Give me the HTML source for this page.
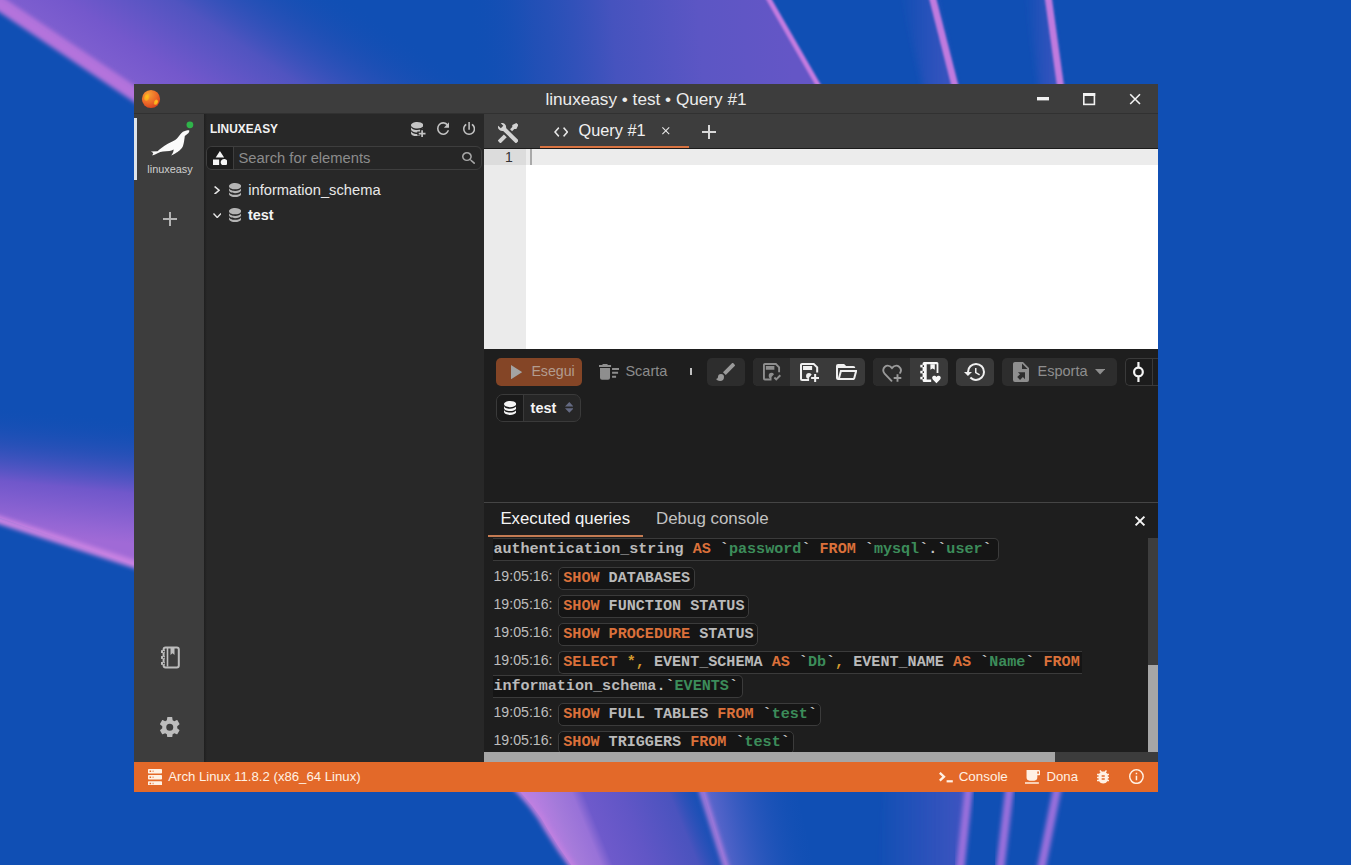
<!DOCTYPE html>
<html><head><meta charset="utf-8">
<style>
*{box-sizing:border-box}
html,body{margin:0;padding:0}
body{width:1351px;height:865px;overflow:hidden;position:relative;background:#104fb4;font-family:"Liberation Sans",sans-serif}
.a{position:absolute}
#bg{position:absolute;left:0;top:0}
.q{font-family:"Liberation Mono",monospace;font-weight:bold;font-size:15.1px;white-space:pre}
</style></head><body>
<svg id="bg" width="1351" height="865" viewBox="0 0 1351 865">
<defs>
<filter id="b1" x="-50%" y="-50%" width="200%" height="200%"><feGaussianBlur stdDeviation="2"/></filter>
<filter id="b2" x="-50%" y="-50%" width="200%" height="200%"><feGaussianBlur stdDeviation="1"/></filter>
<filter id="b3" x="-50%" y="-50%" width="200%" height="200%"><feGaussianBlur stdDeviation="3"/></filter>
<linearGradient id="gTopA" gradientUnits="userSpaceOnUse" x1="0" y1="4" x2="111" y2="-162">
<stop offset="0" stop-color="#8060d0"/>
<stop offset="0.2" stop-color="#7458cc"/>
<stop offset="0.5" stop-color="#5054c0"/>
<stop offset="0.78" stop-color="#2a50b6" stop-opacity="0.5"/>
<stop offset="1" stop-color="#104fb4" stop-opacity="0"/>
</linearGradient>
<linearGradient id="gTopB" gradientUnits="userSpaceOnUse" x1="790" y1="30" x2="470" y2="50">
<stop offset="0" stop-color="#6456c6"/>
<stop offset="0.28" stop-color="#5c56c4"/>
<stop offset="0.55" stop-color="#4653be"/>
<stop offset="0.8" stop-color="#2c50b7" stop-opacity="0.6"/>
<stop offset="1" stop-color="#104fb4" stop-opacity="0"/>
</linearGradient>
<linearGradient id="gLeft" gradientUnits="userSpaceOnUse" x1="0" y1="405" x2="-12" y2="530">
<stop offset="0" stop-color="#104fb4" stop-opacity="0"/>
<stop offset="0.3" stop-color="#3a52bb" stop-opacity="0.55"/>
<stop offset="0.6" stop-color="#7558cc" stop-opacity="0.95"/>
<stop offset="0.9" stop-color="#9466d4"/>
<stop offset="1" stop-color="#a06ad6"/>
</linearGradient>
<linearGradient id="gBot" gradientUnits="userSpaceOnUse" x1="548" y1="830" x2="714.5" y2="761.6">
<stop offset="0" stop-color="#b67ee0"/>
<stop offset="0.1" stop-color="#a47ada"/>
<stop offset="0.2" stop-color="#9872d8"/>
<stop offset="0.26" stop-color="#6e5acb"/>
<stop offset="0.45" stop-color="#6156c6"/>
<stop offset="0.7" stop-color="#4a53be"/>
<stop offset="0.92" stop-color="#104fb4" stop-opacity="0"/>
</linearGradient>
<linearGradient id="gBot2" gradientUnits="userSpaceOnUse" x1="712" y1="830" x2="810" y2="810">
<stop offset="0" stop-color="#6a6ad0" stop-opacity="0.9"/>
<stop offset="1" stop-color="#104fb4" stop-opacity="0"/>
</linearGradient>
<linearGradient id="gGlowL" x1="0" y1="0" x2="1" y2="0">
<stop offset="0" stop-color="#7a5ad0" stop-opacity="0"/>
<stop offset="1" stop-color="#7a5ad0" stop-opacity="0.45"/>
</linearGradient>
</defs>
<rect width="1351" height="865" fill="#104fb4"/>
<polygon points="0,0 140,94 140,110 834,110 769,0" fill="url(#gTopB)"/>
<polygon points="0,0 140,94 140,110 834,110 769,0" fill="url(#gTopA)"/>
<line x1="-10" y1="-2.7" x2="145" y2="101" stroke="#b473dc" stroke-width="14" filter="url(#b1)"/>
<line x1="767" y1="-4" x2="821" y2="90" stroke="#c47ce0" stroke-width="5" filter="url(#b2)"/>
<polygon points="900,-10 934,-10 958,95 925,95" fill="url(#gGlowL)" filter="url(#b3)"/>
<line x1="932" y1="-4" x2="956" y2="90" stroke="#c07ade" stroke-width="7" filter="url(#b2)"/>
<polygon points="1025,-10 1049,-10 1062,95 1040,95" fill="url(#gGlowL)" filter="url(#b3)"/>
<line x1="1048" y1="-4" x2="1061" y2="90" stroke="#c07ade" stroke-width="7" filter="url(#b2)"/>
<polygon points="0,380 140,380 140,567 0,518" fill="url(#gLeft)"/>
<line x1="-10" y1="517" x2="140" y2="566" stroke="#c882e2" stroke-width="8" filter="url(#b1)"/>
<path d="M508,780 Q535,805 548,830 Q560,850 575,870 L760,870 L705,780 Z" fill="url(#gBot)"/>
<path d="M508,780 Q535,805 548,830 Q560,850 575,870" fill="none" stroke="#c080e0" stroke-width="6" filter="url(#b1)"/>
<polygon points="701,785 795,785 815,870 727,870" fill="url(#gBot2)"/>
<line x1="700" y1="785" x2="727" y2="870" stroke="#a87adc" stroke-width="6" filter="url(#b1)"/>
<polygon points="885,780 968,780 960,875 877,875" fill="url(#gGlowL)" filter="url(#b3)"/>
<line x1="969" y1="785" x2="960" y2="870" stroke="#9a70dc" stroke-width="8.5" filter="url(#b1)"/>
<line x1="1010" y1="785" x2="1000" y2="870" stroke="#9a70dc" stroke-width="8.5" filter="url(#b1)"/>
<line x1="1058" y1="785" x2="1041" y2="870" stroke="#9a70dc" stroke-width="8.5" filter="url(#b1)"/>
</svg>

<div class="a" style="left:134px;top:84px;width:1024px;height:30px;background:#3d3d3d;"></div>
<div class="a" style="left:134px;top:113px;width:1024px;height:1px;background:#313131;"></div>
<div class="a" style="left:134px;top:84px;width:1024px;height:30px;line-height:30px;text-align:center;color:#ececec;font-size:17.2px">linuxeasy • test • Query #1</div>
<svg class="a" style="left:140px;top:88px" width="22" height="22" viewBox="0 0 22 22">
<defs><radialGradient id="ball" cx="0.35" cy="0.25" r="0.85"><stop offset="0" stop-color="#f7a035"/><stop offset="0.55" stop-color="#ec6a28"/><stop offset="1" stop-color="#d23a1e"/></radialGradient>
<radialGradient id="spot" cx="0.5" cy="0.4" r="0.6"><stop offset="0" stop-color="#ffc21a"/><stop offset="1" stop-color="#f8a020"/></radialGradient></defs>
<circle cx="11" cy="11" r="9.1" fill="url(#ball)"/>
<ellipse cx="6.8" cy="9.4" rx="2.5" ry="3.4" transform="rotate(15 6.8 9.4)" fill="url(#spot)"/>
<ellipse cx="16" cy="14.2" rx="1.9" ry="2.7" transform="rotate(25 16 14.2)" fill="url(#spot)"/>
</svg>
<svg class="a" style="left:1030px;top:88px" width="120" height="22" viewBox="0 0 120 22">
<rect x="7" y="9" width="12" height="3.4" fill="#f2f2f2"/>
<rect x="53.8" y="5.8" width="10.6" height="10.6" fill="none" stroke="#f2f2f2" stroke-width="1.6"/>
<rect x="53" y="5" width="12.2" height="3" fill="#f2f2f2"/>
<path d="M100.2 6.2 L110 16 M110 6.2 L100.2 16" stroke="#f2f2f2" stroke-width="1.6"/>
</svg>
<div class="a" style="left:134px;top:114px;width:70px;height:648px;background:#3d3d3d;"></div>
<div class="a" style="left:134px;top:118px;width:3px;height:62px;background:#dde3ea;"></div>
<svg class="a" style="left:146px;top:118px" width="50" height="42" viewBox="0 0 50 42">
<path d="M4.9,33.5 L11.5,33.2 C14,31 17,28.5 21.8,25.7 C25,24 29,22.5 31,20.4 C33,18.5 34.5,15.5 36.9,13.8 C38.5,12.7 40.5,12.2 43.2,12.2 C43.6,13.5 42.8,15 41.3,16 L38.8,18 C38.6,19.5 38.5,20.5 38.3,21.8 C38,24 37.5,26.5 36.9,28.2 C36,30 35,31 34,32 C32,33.8 30,35 25.2,37.6 C26,36.3 26.8,35 27.2,34 L27.7,31.6 C26,32.5 25,32.8 23.3,33 C21,33.2 19,33.3 17,33.5 C15,33.8 13.5,34.3 12.1,35 C10,36 8,37 6.3,37.6 C6.5,36.5 7,35.7 7.3,35 Z" fill="#fafafa"/>
<circle cx="43.9" cy="6.8" r="3.4" fill="#2fb44a"/>
</svg>
<div class="a" style="left:134px;top:162px;width:72px;text-align:center;color:#cfcfcf;font-size:10.9px;line-height:14px">linuxeasy</div>
<div class="a" style="left:169px;top:212px;width:2px;height:14px;background:#b4b4b4;"></div>
<div class="a" style="left:163px;top:218px;width:14px;height:2px;background:#b4b4b4;"></div>
<svg class="a" style="left:158px;top:644px" width="24" height="26" viewBox="0 0 24 26">
<rect x="5.6" y="3.6" width="15.2" height="19.8" rx="2" fill="none" stroke="#bdbdbd" stroke-width="2"/>
<path d="M9.5 4 V22.6" stroke="#bdbdbd" stroke-width="1.6"/>
<path d="M12.5 4 V11 L14.5 9.3 L16.5 11 V4 Z" fill="#bdbdbd"/>
<rect x="3" y="6.2" width="4" height="2.8" fill="#bdbdbd"/><rect x="5.2" y="7" width="1.3" height="1.3" fill="#2a2a2a"/>
<rect x="3" y="12.1" width="4" height="2.8" fill="#bdbdbd"/><rect x="5.2" y="12.9" width="1.3" height="1.3" fill="#2a2a2a"/>
<rect x="3" y="18" width="4" height="2.8" fill="#bdbdbd"/><rect x="5.2" y="18.8" width="1.3" height="1.3" fill="#2a2a2a"/>
</svg>
<div class="a" style="left:204px;top:114px;width:280px;height:648px;background:#282828;"></div>
<div class="a" style="left:204px;top:114px;width:3px;height:648px;background:linear-gradient(90deg,#1f1f1f,#282828);"></div>
<div class="a" style="left:210px;top:121px;font-size:11.9px;line-height:16px;color:#f2f2f2;font-weight:bold;white-space:pre;">LINUXEASY</div>
<div class="a" style="left:206px;top:146px;width:276px;height:24px;background:#262626;border:1px solid #3e3e3e;border-radius:6px"></div>
<div class="a" style="left:207px;top:147px;width:27px;height:22px;background:#1c1c1c;border-right:1px solid #3e3e3e;border-radius:5px 0 0 5px"></div>
<div class="a" style="left:238.5px;top:149px;font-size:14.75px;line-height:18px;color:#8c8c8c;font-weight:normal;white-space:pre;">Search for elements</div>
<div class="a" style="left:248.3px;top:180.5px;font-size:14.7px;line-height:18px;color:#e8e8e8;font-weight:normal;white-space:pre;">information_schema</div>
<div class="a" style="left:248px;top:205.5px;font-size:14.45px;line-height:18px;color:#f4f4f4;font-weight:bold;white-space:pre;">test</div>
<div class="a" style="left:484px;top:114px;width:674px;height:34px;background:#3d3d3d;"></div>
<div class="a" style="left:484px;top:148px;width:674px;height:1px;background:#1b1b1b;"></div>
<div class="a" style="left:540px;top:146px;width:149px;height:2px;background:#d87341;"></div>
<div class="a" style="left:578.6px;top:120.5px;font-size:16.3px;line-height:19px;color:#f0f0f0;font-weight:normal;white-space:pre;">Query #1</div>
<div class="a" style="left:484px;top:149px;width:674px;height:200px;background:#ffffff;"></div>
<div class="a" style="left:484px;top:149px;width:42px;height:200px;background:#ebebeb;"></div>
<div class="a" style="left:484px;top:149px;width:42px;height:16px;background:#dcdcdc;"></div>
<div class="a" style="left:526px;top:149px;width:632px;height:16px;background:#ececec;"></div>
<div class="a" style="left:505px;top:149px;font-size:14px;line-height:16px;color:#333333;font-weight:normal;white-space:pre;font-family:"Liberation Mono",monospace;">1</div>
<div class="a" style="left:530px;top:149px;width:2px;height:16px;background:#a9a9a9;"></div>
<div class="a" style="left:484px;top:349px;width:674px;height:153px;background:#1e1e1e;"></div>
<div class="a" style="left:484px;top:502px;width:674px;height:1px;background:#454545;"></div>
<div class="a" style="left:496px;top:358px;width:86px;height:28px;background:#844526;border-radius:5px"></div>
<div class="a" style="left:531.4px;top:362px;font-size:14.2px;line-height:18px;color:#b39c8f;font-weight:normal;white-space:pre;">Esegui</div>
<div class="a" style="left:625.4px;top:361.6px;font-size:14.5px;line-height:18px;color:#8c8c8c;font-weight:normal;white-space:pre;">Scarta</div>
<div class="a" style="left:689.6px;top:367.8px;width:2.4px;height:7.7px;background:#c0c0c0;"></div>
<div class="a" style="left:707px;top:358px;width:37.5px;height:28px;background:#2d2d2d;border-radius:5px"></div>
<div class="a" style="left:753px;top:358px;width:112px;height:28px;background:#3a3a3a;border-radius:5px"></div>
<div class="a" style="left:753px;top:358px;width:37px;height:28px;background:#2b2b2b;border-radius:5px 0 0 5px"></div>
<div class="a" style="left:873px;top:358px;width:75px;height:28px;background:#3a3a3a;border-radius:5px"></div>
<div class="a" style="left:873px;top:358px;width:37px;height:28px;background:#2b2b2b;border-radius:5px 0 0 5px"></div>
<div class="a" style="left:956px;top:358px;width:38px;height:28px;background:#3a3a3a;border-radius:5px"></div>
<div class="a" style="left:1002px;top:358px;width:115px;height:28px;background:#2d2d2d;border-radius:5px"></div>
<div class="a" style="left:1125px;top:358px;width:33px;height:28px;background:#1c1c1c;border:1px solid #3a3a3a;border-right:none;border-radius:5px 0 0 5px"></div>
<div class="a" style="left:1152px;top:359px;width:1px;height:26px;background:#3a3a3a;"></div>
<div class="a" style="left:1037.5px;top:361.6px;font-size:14.54px;line-height:18px;color:#8e8e8e;font-weight:normal;white-space:pre;">Esporta</div>
<div class="a" style="left:496px;top:394px;width:85px;height:28px;background:#262626;border:1px solid #3a3a3a;border-radius:7px"></div>
<div class="a" style="left:497px;top:395px;width:27px;height:26px;background:#1a1a1a;border-right:1px solid #3a3a3a;border-radius:6px 0 0 6px"></div>
<div class="a" style="left:530.6px;top:398.5px;font-size:14.45px;line-height:18px;color:#f4f4f4;font-weight:bold;white-space:pre;">test</div>
<div class="a" style="left:484px;top:503px;width:674px;height:259px;background:#1e1e1e;"></div>
<div class="a" style="left:500.4px;top:508.5px;font-size:16.8px;line-height:20px;color:#f4f4f4;font-weight:normal;white-space:pre;">Executed queries</div>
<div class="a" style="left:656px;top:508.5px;font-size:16.9px;line-height:20px;color:#c2c2c2;font-weight:normal;white-space:pre;">Debug console</div>
<div class="a" style="left:488px;top:534.6px;width:155px;height:2.5px;background:#c47b52;"></div>
<svg class="a" style="left:1134px;top:515px" width="12" height="12" viewBox="0 0 12 12"><path d="M1.6,1.6 L10.4,10.4 M10.4,1.6 L1.6,10.4" stroke="#f4f4f4" stroke-width="2"/></svg>
<div class="a" style="left:1148px;top:538px;width:10px;height:214px;background:#3d3d3d;"></div>
<div class="a" style="left:1148px;top:665px;width:10px;height:87px;background:#a6a6a6;"></div>
<div class="a" style="left:484px;top:752px;width:674px;height:10px;background:#3c3c3c;"></div>
<div class="a" style="left:484px;top:752px;width:571px;height:10px;background:#a6a6a6;"></div>
<svg class="a" style="left:881px;top:362px" width="22" height="21" viewBox="0 0 22 21"><path d="M10.5,18.8 L3.6,11.6 C1.7,9.6 1.8,6.4 3.9,4.7 C6,3.1 9,3.6 11,6.1 C13,3.6 16,3.1 18.1,4.7 C20.1,6.3 20.3,8.8 19.2,10.8" fill="none" stroke="#9a9a9a" stroke-width="1.9" stroke-linecap="round"/><path d="M16.5,12.2 V19.8 M12.7,16 H20.3" stroke="#9a9a9a" stroke-width="1.9"/></svg>
<svg class="a" style="left:919.5px;top:362px" width="21" height="22" viewBox="0 0 21 22"><path d="M4.1,0 H16.9 A1.5,1.5 0 0 1 18.4,1.5 V11.1 H16.6 V2.3 H6.7 V17.4 H11.2 V20 H4.1 A1.5,1.5 0 0 1 2.6,18.5 V1.5 A1.5,1.5 0 0 1 4.1,0Z" fill="#f8f8f8"/><path d="M10.4,2.3 H14.8 V7.8 L12.6,6.4 L10.4,7.8Z" fill="#f8f8f8"/><rect x="0.3" y="2.8" width="4.1" height="2.6" fill="#f8f8f8"/><rect x="0.3" y="8.8" width="4.1" height="2.6" fill="#f8f8f8"/><rect x="0.3" y="14.8" width="4.1" height="2.6" fill="#f8f8f8"/><rect x="2.6" y="3.3" width="1.4" height="1.6" fill="#222"/><rect x="2.6" y="9.3" width="1.4" height="1.6" fill="#222"/><rect x="2.6" y="15.3" width="1.4" height="1.6" fill="#222"/><path d="M16.45,21.2 L13,17.8 C11.6,16.4 12,14 14,13.8 C15,13.7 15.9,14.2 16.45,15 C17,14.2 17.9,13.7 18.9,13.8 C20.9,14 21.3,16.4 19.9,17.8Z" fill="#f8f8f8"/></svg>
<div class="a" style="left:134px;top:762px;width:1024px;height:30px;background:#e36929;"></div>
<div class="a" style="left:168.3px;top:769px;font-size:13.18px;line-height:16px;color:#fff1e4;font-weight:normal;white-space:pre;">Arch Linux 11.8.2 (x86_64 Linux)</div>
<div class="a" style="left:958.7px;top:769px;font-size:13.4px;line-height:16px;color:#fff1e4;font-weight:normal;white-space:pre;">Console</div>
<div class="a" style="left:1046.5px;top:769px;font-size:13.2px;line-height:16px;color:#fff1e4;font-weight:normal;white-space:pre;">Dona</div>
<svg class="a" style="left:939px;top:772px" width="15" height="11" viewBox="0 0 15 11"><path d="M0.8,0.8 L5,4.7 L0.8,8.6" fill="none" stroke="#fff1e4" stroke-width="2.3"/><rect x="7.6" y="8.2" width="6.2" height="2.2" fill="#fff1e4"/></svg>
<svg class="a" style="left:160.10px;top:716.80px" width="19.50" height="20.40" viewBox="2.271 2.000 19.454 20.000" preserveAspectRatio="none"><path d="M12,15.5A3.5,3.5 0 0,1 8.5,12A3.5,3.5 0 0,1 12,8.5A3.5,3.5 0 0,1 15.5,12A3.5,3.5 0 0,1 12,15.5M19.43,12.97C19.47,12.65 19.5,12.33 19.5,12C19.5,11.67 19.47,11.34 19.43,11L21.54,9.37C21.73,9.22 21.78,8.95 21.66,8.73L19.66,5.27C19.54,5.05 19.27,4.96 19.05,5.05L16.56,6.05C16.04,5.66 15.5,5.32 14.87,5.07L14.5,2.42C14.46,2.18 14.25,2 14,2H10C9.75,2 9.54,2.18 9.5,2.42L9.13,5.07C8.5,5.32 7.96,5.66 7.44,6.05L4.95,5.05C4.73,4.96 4.46,5.05 4.34,5.27L2.34,8.73C2.21,8.95 2.27,9.22 2.46,9.37L4.57,11C4.53,11.34 4.5,11.67 4.5,12C4.5,12.33 4.53,12.65 4.57,12.97L2.46,14.63C2.27,14.78 2.21,15.05 2.34,15.27L4.34,18.73C4.46,18.95 4.73,19.03 4.95,18.95L7.44,17.94C7.96,18.34 8.5,18.68 9.13,18.93L9.5,21.58C9.54,21.82 9.75,22 10,22H14C14.25,22 14.46,21.82 14.5,21.58L14.87,18.93C15.5,18.67 16.04,18.34 16.56,17.94L19.05,18.95C19.27,19.03 19.54,18.95 19.66,18.73L21.66,15.27C21.78,15.05 21.73,14.78 21.54,14.63L19.43,12.97Z" fill="#bdbdbd"/></svg>
<svg class="a" style="left:410.70px;top:121.70px" width="12.50" height="14.40" viewBox="4.000 3.000 16.000 18.000" preserveAspectRatio="none"><path d="M12,3C7.58,3 4,4.79 4,7C4,9.21 7.58,11 12,11C16.42,11 20,9.21 20,7C20,4.79 16.42,3 12,3M4,9V12C4,14.21 7.58,16 12,16C16.42,16 20,14.21 20,12V9C20,11.21 16.42,13 12,13C7.58,13 4,11.21 4,9M4,14V17C4,19.21 7.58,21 12,21C16.42,21 20,19.21 20,17V14C20,16.21 16.42,18 12,18C7.58,18 4,16.21 4,14Z" fill="#c4c4c4"/></svg>
<svg class="a" style="left:436.70px;top:122.00px" width="12.30" height="13.00" viewBox="4.000 4.000 16.000 16.000" preserveAspectRatio="none"><path d="M17.65,6.35C16.2,4.9 14.21,4 12,4A8,8 0 0,0 4,12A8,8 0 0,0 12,20C15.73,20 18.84,17.45 19.73,14H17.65C16.83,16.33 14.61,18 12,18A6,6 0 0,1 6,12A6,6 0 0,1 12,6C13.66,6 15.14,6.69 16.22,7.78L13,11H20V4L17.65,6.35Z" fill="#c4c4c4"/></svg>
<svg class="a" style="left:463.00px;top:122.00px" width="12.20" height="13.00" viewBox="4.000 3.000 16.000 17.000" preserveAspectRatio="none"><path d="M16.56,5.44L15.11,6.89C16.84,7.94 18,9.83 18,12A6,6 0 0,1 12,18A6,6 0 0,1 6,12C6,9.83 7.16,7.94 8.88,6.88L7.44,5.44C5.36,6.88 4,9.28 4,12A8,8 0 0,0 12,20A8,8 0 0,0 20,12C20,9.28 18.64,6.88 16.56,5.44M13,3H11V13H13Z" fill="#c4c4c4"/></svg>
<svg class="a" style="left:212.90px;top:150.90px" width="14.60" height="14.60" viewBox="3.000 2.000 19.000 20.000" preserveAspectRatio="none"><path d="M11,13.5V21.5H3V13.5H11M12,2L17.5,11H6.5L12,2M17.5,13C20,13 22,15 22,17.5C22,20 20,22 17.5,22C15,22 13,20 13,17.5C13,15 15,13 17.5,13Z" fill="#f4f4f4"/></svg>
<svg class="a" style="left:461.90px;top:152.20px" width="13.30" height="12.20" viewBox="3.000 3.000 17.500 17.500" preserveAspectRatio="none"><path d="M9.5,3A6.5,6.5 0 0,1 16,9.5C16,11.11 15.41,12.59 14.44,13.73L14.71,14H15.5L20.5,19L19,20.5L14,15.5V14.71L13.73,14.44C12.59,15.41 11.11,16 9.5,16A6.5,6.5 0 0,1 3,9.5A6.5,6.5 0 0,1 9.5,3M9.5,5C7,5 5,7 5,9.5C5,12 7,14 9.5,14C12,14 14,12 14,9.5C14,7 12,5 9.5,5Z" fill="#a8a8a8"/></svg>
<svg class="a" style="left:214.00px;top:185.90px" width="6.40" height="8.60" viewBox="8.590 6.000 7.410 12.000" preserveAspectRatio="none"><path d="M8.59,16.58L13.17,12L8.59,7.41L10,6L16,12L10,18L8.59,16.58Z" fill="#e6e6e6"/></svg>
<svg class="a" style="left:229.00px;top:183.10px" width="12.20" height="14.20" viewBox="4.000 3.000 16.000 18.000" preserveAspectRatio="none"><path d="M12,3C7.58,3 4,4.79 4,7C4,9.21 7.58,11 12,11C16.42,11 20,9.21 20,7C20,4.79 16.42,3 12,3M4,9V12C4,14.21 7.58,16 12,16C16.42,16 20,14.21 20,12V9C20,11.21 16.42,13 12,13C7.58,13 4,11.21 4,9M4,14V17C4,19.21 7.58,21 12,21C16.42,21 20,19.21 20,17V14C20,16.21 16.42,18 12,18C7.58,18 4,16.21 4,14Z" fill="#b4b4b4"/></svg>
<svg class="a" style="left:212.50px;top:212.70px" width="8.50" height="5.50" viewBox="6.000 8.580 12.000 7.420" preserveAspectRatio="none"><path d="M7.41,8.58L12,13.17L16.59,8.58L18,10L12,16L6,10L7.41,8.58Z" fill="#e6e6e6"/></svg>
<svg class="a" style="left:229.00px;top:208.00px" width="12.20" height="14.20" viewBox="4.000 3.000 16.000 18.000" preserveAspectRatio="none"><path d="M12,3C7.58,3 4,4.79 4,7C4,9.21 7.58,11 12,11C16.42,11 20,9.21 20,7C20,4.79 16.42,3 12,3M4,9V12C4,14.21 7.58,16 12,16C16.42,16 20,14.21 20,12V9C20,11.21 16.42,13 12,13C7.58,13 4,11.21 4,9M4,14V17C4,19.21 7.58,21 12,21C16.42,21 20,19.21 20,17V14C20,16.21 16.42,18 12,18C7.58,18 4,16.21 4,14Z" fill="#b4b4b4"/></svg>
<svg class="a" style="left:497.60px;top:123.00px" width="20.40" height="20.00" viewBox="1.999 2.000 20.002 20.001" preserveAspectRatio="none"><path d="M21.71 20.29L20.29 21.71A1 1 0 0 1 18.88 21.71L7.05 9.9A3.81 3.81 0 0 1 6 10A4 4 0 0 1 2.22 4.7L4.76 7.24L5.29 6.71L6.71 5.29L7.24 4.76L4.7 2.22A4 4 0 0 1 10 6A3.81 3.81 0 0 1 9.9 7.05L21.71 18.88A1 1 0 0 1 21.71 20.29M2.29 18.88A1 1 0 0 0 2.29 20.29L3.71 21.71A1 1 0 0 0 5.12 21.71L10.59 16.25L7.76 13.42M20 2L16 4V6L13.83 8.17L15.83 10.17L18 8H20L22 4Z" fill="#d2d2d2"/></svg>
<svg class="a" style="left:554.00px;top:126.50px" width="14.40" height="10.00" viewBox="2.000 6.000 20.000 12.000" preserveAspectRatio="none"><path d="M14.6,16.6L19.2,12L14.6,7.4L16,6L22,12L16,18L14.6,16.6M9.4,16.6L4.8,12L9.4,7.4L8,6L2,12L8,18L9.4,16.6Z" fill="#e8e8e8"/></svg>
<svg class="a" style="left:662.00px;top:127.00px" width="7.60" height="7.50" viewBox="5.000 5.000 14.000 14.000" preserveAspectRatio="none"><path d="M19,6.41L17.59,5L12,10.59L6.41,5L5,6.41L10.59,12L5,17.59L6.41,19L12,13.41L17.59,19L19,17.59L13.41,12L19,6.41Z" fill="#e8e8e8"/></svg>
<svg class="a" style="left:702.00px;top:125.00px" width="14.00" height="14.00" viewBox="5.000 5.000 14.000 14.000" preserveAspectRatio="none"><path d="M19,13H13V19H11V13H5V11H11V5H13V11H19V13Z" fill="#d8d8d8"/></svg>
<svg class="a" style="left:510.60px;top:364.50px" width="11.20" height="14.30" viewBox="8.000 5.140 11.000 14.000" preserveAspectRatio="none"><path d="M8,5.14V19.14L19,12.14L8,5.14Z" fill="#a3a3a3"/></svg>
<svg class="a" style="left:598.90px;top:364.00px" width="20.10" height="15.70" viewBox="2.000 4.000 20.000 16.000" preserveAspectRatio="none"><path d="M15,16H19V18H15V16M15,8H22V10H15V8M15,12H21V14H15V12M3,18A2,2 0 0,0 5,20H11A2,2 0 0,0 13,18V8H3V18M14,5H11L10,4H6L5,5H2V7H14V5Z" fill="#8e8e8e"/></svg>
<svg class="a" style="left:716.10px;top:362.90px" width="19.00" height="18.00" viewBox="2.000 2.997 19.003 18.003" preserveAspectRatio="none"><path d="M20.71,4.63L19.37,3.29C19,2.9 18.35,2.9 17.96,3.29L9,12.25L11.75,15L20.71,6.04C21.1,5.65 21.1,5 20.71,4.63M7,14A3,3 0 0,0 4,17C4,18.31 2.84,19 2,19C2.92,20.22 4.5,21 6,21A4,4 0 0,0 10,17A3,3 0 0,0 7,14Z" fill="#9a9a9a"/></svg>
<svg class="a" style="left:835.70px;top:364.00px" width="21.50" height="16.00" viewBox="2.000 4.000 21.200 16.000" preserveAspectRatio="none"><path d="M6.1,10L4,18V8H21A2,2 0 0,0 19,6H12L10,4H4A2,2 0 0,0 2,6V18A2,2 0 0,0 4,20H19C19.9,20 20.7,19.4 20.9,18.5L23.2,10H6.1M19,18H6L7.6,12H20.6L19,18Z" fill="#f0f0f0"/></svg>
<svg class="a" style="left:964.00px;top:363.20px" width="21.00" height="17.90" viewBox="1.000 3.000 21.000 18.000" preserveAspectRatio="none"><path d="M13.5,8H12V13L16.28,15.54L17,14.33L13.5,12.25V8M13,3A9,9 0 0,0 4,12H1L4.96,16.03L9,12H6A7,7 0 0,1 13,5A7,7 0 0,1 20,12A7,7 0 0,1 13,19C11.07,19 9.32,18.21 8.06,16.94L6.64,18.36C8.27,20 10.5,21 13,21A9,9 0 0,0 22,12A9,9 0 0,0 13,3Z" fill="#f0f0f0"/></svg>
<svg class="a" style="left:1013.00px;top:362.00px" width="16.00" height="19.90" viewBox="4.000 2.000 16.000 20.000" preserveAspectRatio="none"><path d="M6,2C4.89,2 4,2.9 4,4V20A2,2 0 0,0 6,22H18A2,2 0 0,0 20,20V8L14,2H6M13,3.5L18.5,9H13V3.5M8.93,12.22H16V19.29L13.88,17.17L11.05,20L8.22,17.17L11.05,14.35L8.93,12.22Z" fill="#8e8e8e"/></svg>
<svg class="a" style="left:1094.90px;top:369.40px" width="10.20" height="5.50" viewBox="7.000 10.000 10.000 5.000" preserveAspectRatio="none"><path d="M7,10L12,15L17,10H7Z" fill="#8e8e8e"/></svg>
<svg class="a" style="left:1133.40px;top:362.00px" width="10.90" height="19.90" viewBox="7.000 3.000 10.000 18.000" preserveAspectRatio="none"><path d="M17,12C17,14.42 15.28,16.44 13,16.9V21H11V16.9C8.72,16.44 7,14.42 7,12C7,9.58 8.72,7.56 11,7.1V3H13V7.1C15.28,7.56 17,9.58 17,12M12,9A3,3 0 0,0 9,12A3,3 0 0,0 12,15A3,3 0 0,0 15,12A3,3 0 0,0 12,9Z" fill="#f4f4f4"/></svg>
<svg class="a" style="left:504.00px;top:401.30px" width="12.30" height="13.90" viewBox="4.000 3.000 16.000 18.000" preserveAspectRatio="none"><path d="M12,3C7.58,3 4,4.79 4,7C4,9.21 7.58,11 12,11C16.42,11 20,9.21 20,7C20,4.79 16.42,3 12,3M4,9V12C4,14.21 7.58,16 12,16C16.42,16 20,14.21 20,12V9C20,11.21 16.42,13 12,13C7.58,13 4,11.21 4,9M4,14V17C4,19.21 7.58,21 12,21C16.42,21 20,19.21 20,17V14C20,16.21 16.42,18 12,18C7.58,18 4,16.21 4,14Z" fill="#f4f4f4"/></svg>
<svg class="a" style="left:564.70px;top:402.30px" width="8.60" height="10.80" viewBox="7.000 6.000 10.000 12.000" preserveAspectRatio="none"><path d="M12,6L7,11H17L12,6M7,13L12,18L17,13H7Z" fill="#646a82"/></svg>
<svg class="a" style="left:763.00px;top:363.00px" width="18.00" height="17.80" viewBox="3.000 3.000 19.000 18.300" preserveAspectRatio="none"><path d="M17,3H5C3.89,3 3,3.9 3,5V19A2,2 0 0,0 5,21H12V19H5V5H16.17L19,7.83V12.5H21V7L17,3Z M6,6H15V10H6Z M12,13A3,3 0 0,0 9,16A3,3 0 0,0 12,19V17.5L14.6,14.5A3,3 0 0,0 12,13Z M14.3,18.6L17,21.3L22,16.3L20.6,14.9L17,18.5L15.7,17.2Z" fill="#8e8e8e"/></svg>
<svg class="a" style="left:800.00px;top:363.00px" width="19.20" height="19.00" viewBox="3.000 3.000 19.000 19.000" preserveAspectRatio="none"><path d="M17,3H5C3.89,3 3,3.9 3,5V19A2,2 0 0,0 5,21H12V19H5V5H16.17L19,7.83V12.5H21V7L17,3Z M6,6H15V10H6Z M12,13A3,3 0 0,0 9,16A3,3 0 0,0 12,19V17.5L14.6,14.5A3,3 0 0,0 12,13Z M17,14H19V17H22V19H19V22H17V19H14V17H17V14Z" fill="#f0f0f0"/></svg>
<svg class="a" style="left:148.00px;top:768.50px" width="14.00" height="16.70" viewBox="3.000 1.000 18.000 22.000" preserveAspectRatio="none"><path d="M4,1H20A1,1 0 0,1 21,2V6A1,1 0 0,1 20,7H4A1,1 0 0,1 3,6V2A1,1 0 0,1 4,1M4,9H20A1,1 0 0,1 21,10V14A1,1 0 0,1 20,15H4A1,1 0 0,1 3,14V10A1,1 0 0,1 4,9M4,17H20A1,1 0 0,1 21,18V22A1,1 0 0,1 20,23H4A1,1 0 0,1 3,22V18A1,1 0 0,1 4,17M9,5H10V3H9V5M9,13H10V11H9V13M9,21H10V19H9V21M5,3V5H7V3H5M5,11V13H7V11H5M5,19V21H7V19H5Z" fill="#fff1e4"/></svg>
<svg class="a" style="left:1025.00px;top:770.20px" width="15.40" height="13.70" viewBox="2.000 3.000 20.000 18.000" preserveAspectRatio="none"><path d="M2,21H20V19H2M20,8H18V5H20M20,3H4V13A4,4 0 0,0 8,17H14A4,4 0 0,0 18,13V10H20A2,2 0 0,0 22,8V5C22,3.89 21.1,3 20,3Z" fill="#fff1e4"/></svg>
<svg class="a" style="left:1096.80px;top:770.00px" width="12.40" height="13.50" viewBox="4.000 3.000 16.000 18.000" preserveAspectRatio="none"><path d="M14,12H10V10H14M14,16H10V14H14M20,8H17.19C16.74,7.22 16.12,6.55 15.37,6.04L17,4.41L15.59,3L13.42,5.17C12.96,5.06 12.5,5 12,5C11.5,5 11.04,5.06 10.59,5.17L8.41,3L7,4.41L8.62,6.04C7.88,6.55 7.26,7.22 6.81,8H4V10H6.09C6.04,10.33 6,10.66 6,11V12H4V14H6V15C6,15.34 6.04,15.67 6.09,16H4V18H6.81C7.85,19.79 9.78,21 12,21C14.22,21 16.15,19.79 17.19,18H20V16H17.91C17.96,15.67 18,15.34 18,15V14H20V12H18V11C18,10.66 17.96,10.33 17.91,10H20V8Z" fill="#fff1e4"/></svg>
<svg class="a" style="left:1129.30px;top:769.30px" width="14.90" height="15.10" viewBox="2.000 2.000 20.000 20.000" preserveAspectRatio="none"><path d="M11,9H13V7H11M12,20C7.59,20 4,16.41 4,12C4,7.59 7.59,4 12,4C16.41,4 20,7.59 20,12C20,16.41 16.41,20 12,20M12,2A10,10 0 0,0 2,12A10,10 0 0,0 12,22A10,10 0 0,0 22,12A10,10 0 0,0 12,2M11,17H13V11H11V17Z" fill="#fff1e4"/></svg>
<svg class="a" style="left:416px;top:127px" width="12" height="12" viewBox="0 0 12 12"><path d="M6.1,1.2 V10.8 M1.3,6.6 H10.9" stroke="#282828" stroke-width="4"/><path d="M6.1,3.2 V10 M2.7,6.6 H9.5" stroke="#c4c4c4" stroke-width="1.7"/></svg>
<div class="a" style="left:484px;top:537px;width:664px;height:215px;overflow:hidden">
<div class="a q" style="left:8.80px;top:1.00px;width:506.10px;height:23px;background:#151515;border-top:1px solid #3b3b3b;border-bottom:1px solid #3b3b3b;border-left:none;border-right:1px solid #3b3b3b;border-radius:0 5px 5px 0;padding-left:0.6px;line-height:21px"><span style="color:#bababa">authentication_string</span><span style="color:#bababa"> </span><span style="color:#da703a">AS</span><span style="color:#bababa"> </span><span style="color:#c4c4c4">`</span><span style="color:#3c8c5a">password</span><span style="color:#c4c4c4">`</span><span style="color:#bababa"> </span><span style="color:#da703a">FROM</span><span style="color:#bababa"> </span><span style="color:#c4c4c4">`</span><span style="color:#3c8c5a">mysql</span><span style="color:#c4c4c4">`</span><span style="color:#c4c4c4">.</span><span style="color:#c4c4c4">`</span><span style="color:#3c8c5a">user</span><span style="color:#c4c4c4">`</span></div>
<div class="a q" style="left:74.30px;top:29.50px;width:136.40px;height:23px;background:#151515;border-top:1px solid #3b3b3b;border-bottom:1px solid #3b3b3b;border-left:1px solid #3b3b3b;border-right:1px solid #3b3b3b;border-radius:5px 5px 5px 5px;padding-left:4px;line-height:21px"><span style="color:#da703a">SHOW</span><span style="color:#bababa"> </span><span style="color:#bababa">DATABASES</span></div>
<div class="a" style="left:9.5px;top:30.00px;font-size:14.17px;line-height:18px;color:#bdbdbd;white-space:pre">19:05:16:</div>
<div class="a q" style="left:74.30px;top:57.50px;width:191.20px;height:23px;background:#151515;border-top:1px solid #3b3b3b;border-bottom:1px solid #3b3b3b;border-left:1px solid #3b3b3b;border-right:1px solid #3b3b3b;border-radius:5px 5px 5px 5px;padding-left:4px;line-height:21px"><span style="color:#da703a">SHOW</span><span style="color:#bababa"> </span><span style="color:#bababa">FUNCTION</span><span style="color:#bababa"> </span><span style="color:#bababa">STATUS</span></div>
<div class="a" style="left:9.5px;top:58.00px;font-size:14.17px;line-height:18px;color:#bdbdbd;white-space:pre">19:05:16:</div>
<div class="a q" style="left:74.30px;top:85.50px;width:200.20px;height:23px;background:#151515;border-top:1px solid #3b3b3b;border-bottom:1px solid #3b3b3b;border-left:1px solid #3b3b3b;border-right:1px solid #3b3b3b;border-radius:5px 5px 5px 5px;padding-left:4px;line-height:21px"><span style="color:#da703a">SHOW</span><span style="color:#bababa"> </span><span style="color:#da703a">PROCEDURE</span><span style="color:#bababa"> </span><span style="color:#bababa">STATUS</span></div>
<div class="a" style="left:9.5px;top:86.00px;font-size:14.17px;line-height:18px;color:#bdbdbd;white-space:pre">19:05:16:</div>
<div class="a q" style="left:74.30px;top:113.50px;width:523.70px;height:23px;background:#151515;border-top:1px solid #3b3b3b;border-bottom:1px solid #3b3b3b;border-left:1px solid #3b3b3b;border-right:none;border-radius:5px 0 0 5px;padding-left:4px;line-height:21px"><span style="color:#da703a">SELECT</span><span style="color:#bababa"> </span><span style="color:#d29a2e">*</span><span style="color:#d29a2e">,</span><span style="color:#bababa"> </span><span style="color:#bababa">EVENT_SCHEMA</span><span style="color:#bababa"> </span><span style="color:#da703a">AS</span><span style="color:#bababa"> </span><span style="color:#c4c4c4">`</span><span style="color:#3c8c5a">Db</span><span style="color:#c4c4c4">`</span><span style="color:#d29a2e">,</span><span style="color:#bababa"> </span><span style="color:#bababa">EVENT_NAME</span><span style="color:#bababa"> </span><span style="color:#da703a">AS</span><span style="color:#bababa"> </span><span style="color:#c4c4c4">`</span><span style="color:#3c8c5a">Name</span><span style="color:#c4c4c4">`</span><span style="color:#bababa"> </span><span style="color:#da703a">FROM</span></div>
<div class="a" style="left:9.5px;top:114.00px;font-size:14.17px;line-height:18px;color:#bdbdbd;white-space:pre">19:05:16:</div>
<div class="a q" style="left:8.80px;top:138.00px;width:250.40px;height:23px;background:#151515;border-top:1px solid #3b3b3b;border-bottom:1px solid #3b3b3b;border-left:none;border-right:1px solid #3b3b3b;border-radius:0 5px 5px 0;padding-left:0.6px;line-height:21px"><span style="color:#bababa">information_schema</span><span style="color:#c4c4c4">.</span><span style="color:#c4c4c4">`</span><span style="color:#3c8c5a">EVENTS</span><span style="color:#c4c4c4">`</span></div>
<div class="a q" style="left:74.30px;top:165.50px;width:262.70px;height:23px;background:#151515;border-top:1px solid #3b3b3b;border-bottom:1px solid #3b3b3b;border-left:1px solid #3b3b3b;border-right:1px solid #3b3b3b;border-radius:5px 5px 5px 5px;padding-left:4px;line-height:21px"><span style="color:#da703a">SHOW</span><span style="color:#bababa"> </span><span style="color:#bababa">FULL</span><span style="color:#bababa"> </span><span style="color:#bababa">TABLES</span><span style="color:#bababa"> </span><span style="color:#da703a">FROM</span><span style="color:#bababa"> </span><span style="color:#c4c4c4">`</span><span style="color:#3c8c5a">test</span><span style="color:#c4c4c4">`</span></div>
<div class="a" style="left:9.5px;top:166.00px;font-size:14.17px;line-height:18px;color:#bdbdbd;white-space:pre">19:05:16:</div>
<div class="a q" style="left:74.30px;top:193.50px;width:236.10px;height:23px;background:#151515;border-top:1px solid #3b3b3b;border-bottom:1px solid #3b3b3b;border-left:1px solid #3b3b3b;border-right:1px solid #3b3b3b;border-radius:5px 5px 5px 5px;padding-left:4px;line-height:21px"><span style="color:#da703a">SHOW</span><span style="color:#bababa"> </span><span style="color:#bababa">TRIGGERS</span><span style="color:#bababa"> </span><span style="color:#da703a">FROM</span><span style="color:#bababa"> </span><span style="color:#c4c4c4">`</span><span style="color:#3c8c5a">test</span><span style="color:#c4c4c4">`</span></div>
<div class="a" style="left:9.5px;top:194.00px;font-size:14.17px;line-height:18px;color:#bdbdbd;white-space:pre">19:05:16:</div>
</div>
</body></html>
